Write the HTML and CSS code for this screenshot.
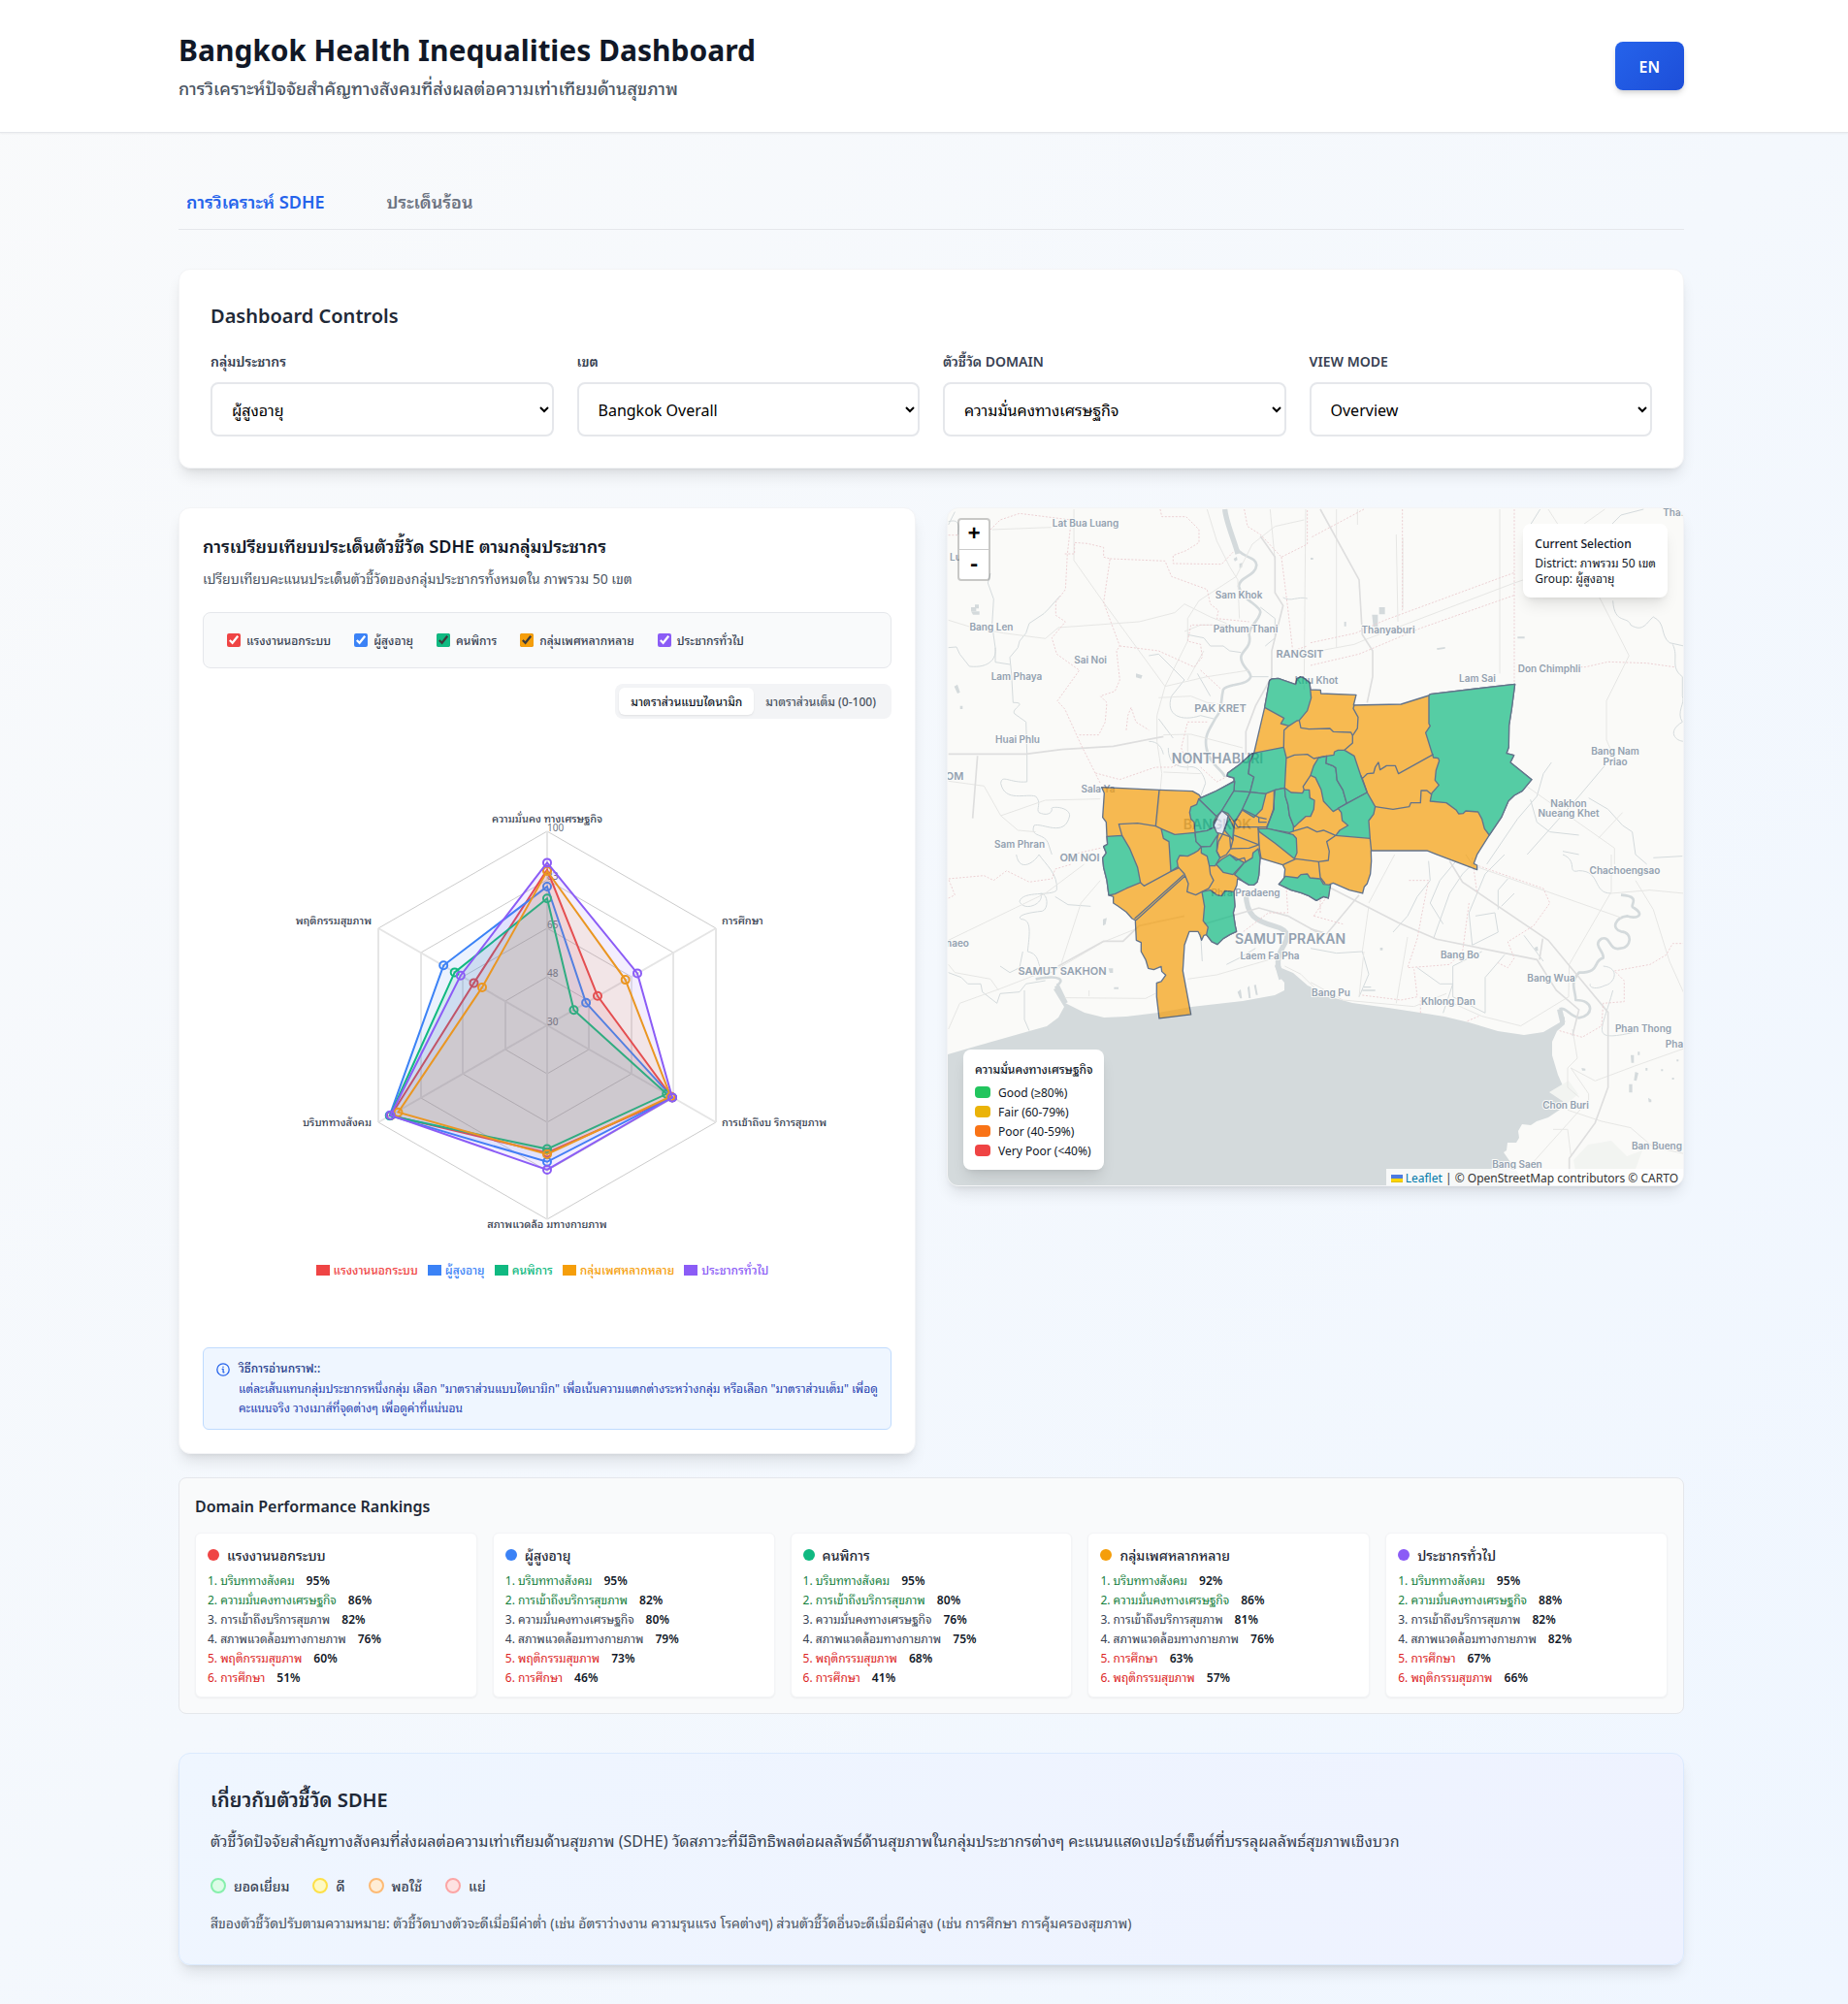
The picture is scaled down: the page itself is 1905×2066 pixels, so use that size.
FILE: index.html
```html
<!DOCTYPE html>
<html lang="th">
<head>
<meta charset="utf-8">
<meta name="viewport" content="width=device-width, initial-scale=1">
<title>Bangkok Health Inequalities Dashboard</title>
<link rel="stylesheet" href="styles.css">
</head>
<body>
<header class="site-header">
  <div class="container header-row">
    <div>
      <h1 class="site-title">Bangkok Health Inequalities Dashboard</h1>
      <p class="site-subtitle">การวิเคราะห์ปัจจัยสำคัญทางสังคมที่ส่งผลต่อความเท่าเทียมด้านสุขภาพ</p>
    </div>
    <button type="button" class="lang-button">EN</button>
  </div>
</header>

<main class="container main">
  <nav class="tabs">
    <button type="button" class="tab tab-active">การวิเคราะห์ SDHE</button>
    <button type="button" class="tab">ประเด็นร้อน</button>
  </nav>

  <section class="card controls">
    <h2 class="section-title">Dashboard Controls</h2>
    <div class="control-grid">
      <div class="field"><label for="group">กลุ่มประชากร</label><select id="group"><option>ผู้สูงอายุ</option></select></div>
      <div class="field"><label for="district">เขต</label><select id="district"><option>Bangkok Overall</option></select></div>
      <div class="field"><label for="domain">ตัวชี้วัด Domain</label><select id="domain"><option>ความมั่นคงทางเศรษฐกิจ</option></select></div>
      <div class="field"><label for="view">View Mode</label><select id="view"><option>Overview</option></select></div>
    </div>
  </section>

  <div class="panels">
    <section class="card chart-card">
      <h3 class="chart-title">การเปรียบเทียบประเด็นตัวชี้วัด SDHE ตามกลุ่มประชากร</h3>
      <p class="chart-subtitle">เปรียบเทียบคะแนนประเด็นตัวชี้วัดของกลุ่มประชากรทั้งหมดใน ภาพรวม 50 เขต</p>
      <div class="group-filter">
        <label><input type="checkbox" class="check-red" checked>แรงงานนอกระบบ</label>
        <label><input type="checkbox" class="check-blue" checked>ผู้สูงอายุ</label>
        <label><input type="checkbox" class="check-green" checked>คนพิการ</label>
        <label><input type="checkbox" class="check-amber" checked>กลุ่มเพศหลากหลาย</label>
        <label><input type="checkbox" class="check-purple" checked>ประชากรทั่วไป</label>
      </div>
      <div class="scale-row">
        <div class="scale-toggle">
          <button type="button" class="scale-option scale-active">มาตราส่วนแบบไดนามิก</button>
          <button type="button" class="scale-option">มาตราส่วนเต็ม (0-100)</button>
        </div>
      </div>
      <div class="chart">
        <svg class="radar" viewBox="0 0 710 540" role="img" aria-label="SDHE">
          <g class="radar-grid">
            <path d="M355 250L398 275V325L355 350L312 325V275Z"/>
            <path d="M355 200L442 250V350L355 400L268 350V250Z"/>
            <path d="M355 150L485 225V375L355 450L225 375V225Z"/>
            <path d="M355 100L529 200V400L355 500L181 400V200Z"/>
            <path class="radar-spoke" d="M355 300V100M355 300L529 200M355 300L529 400M355 300V500M355 300L181 400M355 300L181 200"/>
          </g>
          <g class="radar-ticks">
            <text x="355" y="300">30</text><text x="355" y="250">48</text><text x="355" y="200">65</text><text x="355" y="150">83</text><text x="355" y="100">100</text>
          </g>
          <g class="radar-labels">
            <text x="355" y="91" text-anchor="middle">ความมั่นคง ทางเศรษฐกิจ</text>
            <text x="535" y="196">การศึกษา</text>
            <text x="535" y="404">การเข้าถึงบ ริการสุขภาพ</text>
            <text x="355" y="509" text-anchor="middle">สภาพแวดล้อ มทางกายภาพ</text>
            <text x="174" y="404" text-anchor="end">บริบททางสังคม</text>
            <text x="174" y="196" text-anchor="end">พฤติกรรมสุขภาพ</text>
          </g>
          <g class="series series-red">
            <path d="M355 139.7L407 269.8L484 374.5L355 431.5L194 393L279.5 256.4Z"/>
            <circle cx="355" cy="139.7" r="4"/><circle cx="407" cy="269.8" r="4"/><circle cx="484" cy="374.5" r="4"/><circle cx="355" cy="431.5" r="4"/><circle cx="194" cy="393" r="4"/><circle cx="279.5" cy="256.4" r="4"/>
          </g>
          <g class="series series-blue">
            <path d="M355 157L395.1 276.8L484 374.4L355 440.8L192.7 393.1L248.2 238.3Z"/>
            <circle cx="355" cy="157" r="4"/><circle cx="395.1" cy="276.8" r="4"/><circle cx="484" cy="374.4" r="4"/><circle cx="355" cy="440.8" r="4"/><circle cx="192.7" cy="393.1" r="4"/><circle cx="248.2" cy="238.3" r="4"/>
          </g>
          <g class="series series-green">
            <path d="M355 169.3L382.5 284.2L478.2 370.8L355 427.6L193 393.3L259.7 245.4Z"/>
            <circle cx="355" cy="169.3" r="4"/><circle cx="382.5" cy="284.2" r="4"/><circle cx="478.2" cy="370.8" r="4"/><circle cx="355" cy="427.6" r="4"/><circle cx="193" cy="393.3" r="4"/><circle cx="259.7" cy="245.4" r="4"/>
          </g>
          <g class="series series-amber">
            <path d="M355 141L435.7 253.1L482.4 373.5L355 433L201.5 389.7L288 260.9Z"/>
            <circle cx="355" cy="141" r="4"/><circle cx="435.7" cy="253.1" r="4"/><circle cx="482.4" cy="373.5" r="4"/><circle cx="355" cy="433" r="4"/><circle cx="201.5" cy="389.7" r="4"/><circle cx="288" cy="260.9" r="4"/>
          </g>
          <g class="series series-purple">
            <path d="M355 132.4L448 246.4L484 374.5L355 448.9L193.5 392.8L265.8 248.7Z"/>
            <circle cx="355" cy="132.4" r="4"/><circle cx="448" cy="246.4" r="4"/><circle cx="484" cy="374.5" r="4"/><circle cx="355" cy="448.9" r="4"/><circle cx="193.5" cy="392.8" r="4"/><circle cx="265.8" cy="248.7" r="4"/>
          </g>
        </svg>
        <ul class="legend">
          <li class="text-red">แรงงานนอกระบบ</li>
          <li class="text-blue">ผู้สูงอายุ</li>
          <li class="text-green">คนพิการ</li>
          <li class="text-amber">กลุ่มเพศหลากหลาย</li>
          <li class="text-purple">ประชากรทั่วไป</li>
        </ul>
      </div>
      <div class="note">
        <svg class="note-icon" viewBox="0 0 16 16" aria-hidden="true"><circle cx="8" cy="8" r="6.2"/><path d="M7.2 7.4h.9v3.4h.9M8 5.2v.2"/></svg>
        <div>
          <p class="note-title">วิธีการอ่านกราฟ::</p>
          <p class="note-text">แต่ละเส้นแทนกลุ่มประชากรหนึ่งกลุ่ม เลือก "มาตราส่วนแบบไดนามิก" เพื่อเน้นความแตกต่างระหว่างกลุ่ม หรือเลือก "มาตราส่วนเต็ม" เพื่อดูคะแนนจริง วางเมาส์ที่จุดต่างๆ เพื่อดูค่าที่แน่นอน</p>
        </div>
      </div>
    </section>

    <section class="map">
      <svg class="map-canvas" viewBox="0 0 758 698" preserveAspectRatio="xMidYMid slice" role="img" aria-label="Bangkok districts">
        <path class="sea" d="M0 563L31 554L84 539L102 534L114 525L120 514L109 496L113 494L121 510L141 520L161 525L184 524L217 520L251 514L304 508L337 502L347 497V489L341 482L337 472L340 466L344 474L356 479L371 492L399 505L417 510L454 515L487 520L512 524L537 530L567 539L594 543L614 540L631 530L632 525L629 517L636 525V532L628 539L623 550V564L629 584L636 600L635 610L631 620L619 628L607 632L601 636L592 635L588 642L589 649L586 654H577L576 662L573 664L582 677L591 690L594 700H0Z"/>
        <path class="park" d="M650 700L645 672L660 656L684 652L700 668L716 662L708 684L720 700ZM620 602L640 590L650 604L638 614Z"/>

        <g transform="translate(-16 -13) scale(.3333)">
          <g class="river">
            <path class="river-wide" d="M905 42C908 80 935 140 945 180"/>
            <path class="river-mid" d="M930 130C940 200 1000 180 1003 215C1000 250 950 250 948 280C955 320 1015 340 1015 360C1010 390 980 400 980 430C990 470 955 480 955 500C955 530 985 540 985 560C975 590 910 580 900 600C890 640 900 660 875 690C860 720 840 740 848 780C855 830 900 850 905 870"/>
            <path d="M50 470L75 468L85 490L115 528C180 535 200 500 195 470L185 400L190 320L172 270L180 240M395 310L360 350L345 365L300 395L290 425L270 450L265 470L240 500L245 550L250 640C300 640 240 660 255 675L290 700L293 800V885C240 890 215 860 212 890C225 950 290 920 320 930C340 950 320 970 330 980C350 990 370 985 370 970C360 960 425 960 425 990C410 1060 340 1010 315 1020C300 1060 350 1040 360 1080L370 1110M195 470V515L240 522"/>
            <path d="M790 430L840 440L860 465L900 465L920 480L955 485M670 495L700 490L720 510L780 570L740 620C720 680 770 700 830 680L870 690M820 550L860 620M700 690L745 750M50 90L70 50M50 80C90 70 80 100 80 120M730 780C730 830 760 840 790 840C830 830 845 880 845 890L830 930M670 760C700 760 710 780 715 800M985 560H1040M1085 315C1110 330 1130 310 1160 318M1015 345L1060 380V440L1030 465"/>
          </g>
          <path class="pond" d="M120 345h12v-8h12v12h-8v8h-16ZM120 358h26v10h-20ZM68 590l10-6 8 24-8 4ZM86 650h8v10h-8ZM630 550l20 6-4 10-16-4ZM932 195l10-6 2 10-8 4ZM950 210l10-2-2 14-8 2Z"/>
          <g class="road">
            <path d="M438 42V200L530 330L720 590L695 680V760L710 860L695 1020M185 105L368 98M50 385L115 405L220 425L350 442L390 408L640 390L750 362L780 335L860 375L910 395M50 883L160 898L212 990L350 942L520 938M212 990L265 1035L320 1040M720 590L790 450V380L825 325L940 250L990 150L1060 95L1150 75M850 42L880 140L920 220L945 260L950 380M700 625L800 620L850 640L970 655M715 740L800 738L960 780M715 855L830 860M780 420L830 400L920 400M840 480L790 570M1155 42L1150 600M720 590L850 560L980 540M1045 42L1060 200M790 740V850"/>
          </g>
          <g class="highway">
            <path d="M50 799H290L400 785L560 775L715 745M140 805L125 998M1015 125L1060 190V300L1085 340L1050 480V560L1000 650L970 730V800"/>
          </g>
          <path class="boundary" d="M180 105L210 75L270 55L430 75L418 180L412 290L382 330V370L412 390L370 440L385 490L455 540L387 635L410 660L460 770L520 890M410 180H440V145L480 148L530 160V190L550 195L530 330L580 465L570 480L580 570L565 605L520 620L540 640L535 700L515 740L450 740M550 195L720 202L740 250L850 290L860 335L885 355L880 380L980 390M705 42L710 65L785 65L825 105V145L785 170L745 185V210L895 212L930 175M580 465L700 480L810 530L835 500L830 460L790 450L800 400H870M600 725L605 680L615 655L630 700L670 725M505 858L580 878L690 840H740L785 820L770 780L790 700H850M965 42L975 95L1015 120L1080 190L1160 150V42M1080 190L1100 350L1115 480L1160 465M830 540L895 600M830 840L880 885L910 870M50 122H80M520 1090L410 1115"/>
        </g>

        <g transform="translate(374 -13) scale(.3333)">
          <g class="river"><path d="M710 42L680 90M1030 42L960 60L930 90M935 325C940 400 980 370 990 400C1030 425 1040 390 1060 375C1100 395 1080 430 1110 455L1155 465M1120 460C1140 500 1110 530 1150 560V620C1160 640 1130 670 1150 700C1100 730 1130 760 1155 760V795M745 825L720 860L700 930L640 1000L545 1140M910 835L830 930L670 1110M860 935L920 970L965 1020L995 1040L1005 1110L1040 1140M680 940L700 1010L740 1040L830 1050M780 1100L830 1110M1060 1120L1150 1115"/></g>
          <path class="pond" d="M212 345h18v22h-18ZM190 368h18v38h-14ZM640 436h22v6h-22ZM390 472l26-4v5l-24 4ZM0 192h8v6h-8ZM104 390h6v14h-6Z"/>
          <g class="road"><path d="M0 485L135 460L170 445L630 270L780 220M735 42L830 190L985 495L915 635V755L930 790M910 42L800 120M670 900L940 1090V1140M965 980L890 1060M285 130V350M80 42V470M145 42V90M265 120L270 390M585 42V550"/></g>
          <g class="highway"><path d="M30 42L150 260L160 430L192 480V560L175 640"/></g>
          <path class="boundary" d="M165 42L0 130M284 42V355M630 42V580M0 455L140 425L230 385L630 238M0 525L150 490L340 410L630 308M780 530H850L920 514L1040 518L1125 530"/>
        </g>

        <g transform="translate(-16 357) scale(.3333)">
          <g class="river">
            <path d="M260 0C270 60 320 20 330 0C350 30 390 60 385 110C370 130 280 110 270 145C285 180 350 150 335 120C360 120 360 170 340 175C290 180 260 190 275 200C310 200 300 250 295 300C340 310 320 350 350 375M50 365L90 380L110 400L150 400L155 425L200 460L210 430L270 425L290 400L350 390M285 420V510L300 545M380 130L420 155L490 160M210 345L240 365L270 350L280 300M910 340L950 320L1000 290M830 240L835 330"/>
            <path class="river-mid" d="M320 385C400 370 410 390 385 405"/><path class="river-wide" d="M385 405L412 460"/>
            <path class="river-wide" d="M970 120C972 190 1000 205 1060 222C1110 235 1100 260 1085 285C1065 320 1065 340 1080 385"/>
          </g>
          <path class="pond" d="M528 200l12-4-4 20-8 4ZM545 352h14v14h-10ZM562 410h14v6h-14ZM944 425l10-8 4 28h-6ZM975 412l6-6 4 38h-6ZM995 404l6-2 6 32h-6Z"/>
          <g class="road"><path d="M50 265L350 120L470 30M50 540L85 460L210 415L390 345M400 335L460 150L520 80M350 375L530 270L630 230M50 340L70 365L180 385L205 420M410 443L660 445L690 430M790 385L880 372L1060 320M1200 430L1140 370L1090 345M485 420V438"/></g>
          <g class="highway"><path d="M390 345L530 268H590L640 220L780 190M840 215L1010 165L1100 190L1200 245"/></g>
          <path class="boundary" d="M50 135L70 125L50 75L160 65L190 80L230 50L300 85L370 75L380 45L430 30M1095 100L1100 180L1040 180L960 240M1200 180V120"/>
        </g>

        <g transform="translate(374 357) scale(.3333)">
          <g class="river">
            <path d="M480 0L500 30L470 60L430 120L380 260M365 20L370 80L330 130L300 190L255 240M450 20L400 80L370 150L410 215M600 0L540 60L490 180L500 280L580 240L570 180L510 190M610 75L580 110V170M530 300L440 345V440L540 490V380L600 310M0 290L80 305L160 300L180 370L150 440M330 350L400 400L440 400L410 490M630 120L590 160M660 250L720 330M780 0C830 20 790 60 830 50C900 50 870 120 930 120M935 420C900 550 860 580 1000 550"/>
            <path class="river-mid" d="M960 125C1030 130 980 160 1000 165C1040 190 1000 200 980 190C940 195 930 230 960 238C1000 240 990 290 960 290C920 300 930 250 900 260C870 280 910 300 905 320C870 330 900 365 830 365C800 400 820 420 820 450C880 450 875 500 830 505C800 500 790 470 770 478"/>
            <path class="river-wide" d="M770 478L780 520"/>
            <path d="M905 345C960 350 940 400 910 405C880 420 860 410 865 400"/>
          </g>
          <path class="pond" d="M215 288h8v8h-8ZM165 408h22v4h-22ZM160 418h40v4h-40ZM692 288l10-4 2 14h-8ZM990 620h10v24h-8ZM1012 610h6v10h-6ZM1004 672l10 4-6 24-8-2ZM985 710h10v26h-10ZM1036 660h6v8h-6ZM1084 664h6v6h-6ZM1118 690h6v6h-6ZM1044 752l10 6v8h-8ZM1132 634h6v6h-6ZM838 660l12 2v6h-10Z"/>
          <g class="road"><path d="M180 150L260 0M300 255L265 460M520 40L960 195M930 0V115L800 340L798 440L650 530L530 500L440 460M930 120L1050 110L1155 120M1005 80L1060 170L1110 330L1155 430M805 660L880 700L1000 655L1155 600M805 660L860 740V760L690 950M810 540L825 630L795 660V720L830 750M795 790L900 825L990 845L1060 905L1155 925M795 850L805 930M750 850H795M0 395L100 450L320 470L420 430M165 300L150 440M180 160L160 300"/></g>
          <g class="highway"><path d="M55 100L270 210L390 262L700 325L760 420L830 480L810 560M430 20L470 85L735 265L920 488V720L880 830L800 940V1000M718 260L708 325M0 230L50 245L150 125"/></g>
          <path class="boundary" d="M500 10L515 120M490 150L470 300L430 340L370 345L300 350L330 260L345 180L365 80H300M520 35L720 105L740 150L690 220L610 270L630 320L610 350L580 335M10 190L100 215M10 190L50 130M160 435L280 450L330 440L320 355M770 545L840 565L900 530L905 460L970 455V390L940 360L1050 340L1100 310L1120 275H1155M485 515L520 500M340 440V490"/>
        </g>

        <g class="place-labels">
          <text x="142" y="19">Lat Bua Luang</text><text x="8" y="54">Lu</text><text x="300" y="93">Sam Khok</text>
          <text x="45" y="126">Bang Len</text><text x="307" y="128">Pathum Thani</text><text x="147" y="160">Sai Noi</text>
          <text x="71" y="177">Lam Phaya</text><text x="380" y="181">Khu Khot</text><text x="72" y="242">Huai Phlu</text>
          <text x="155" y="293">Sala Ya</text><text x="74" y="350">Sam Phran</text><text x="454" y="129">Thanyaburi</text>
          <text x="748" y="8">Tha.</text><text x="620" y="169">Don Chimphli</text><text x="546" y="179">Lam Sai</text>
          <text x="688" y="254">Bang Nam</text><text x="688" y="265">Priao</text><text x="640" y="308">Nakhon</text><text x="640" y="318">Nueang Khet</text>
          <text x="10" y="452">naeo</text><text x="307" y="400">Phra Pradaeng</text><text x="332" y="465">Laem Fa Pha</text>
          <text x="395" y="503">Bang Pu</text><text x="528" y="464">Bang Bo</text><text x="516" y="512">Khlong Dan</text><text x="622" y="488">Bang Wua</text>
          <text x="698" y="377">Chachoengsao</text><text x="717" y="540">Phan Thong</text><text x="749" y="556">Pha</text><text x="637" y="619">Chon Buri</text>
          <text x="731" y="661">Ban Bueng</text><text x="587" y="680">Bang Saen</text>
        </g>
        <g class="place-labels town-labels">
          <text x="363" y="154">RANGSIT</text><text x="281" y="210">PAK KRET</text><text x="7" y="280">OM</text><text x="136" y="364">OM NOI</text><text x="118" y="481">SAMUT SAKHON</text>
        </g>
        <g class="place-labels city-labels">
          <text x="278" y="263">NONTHABURI</text><text x="353" y="449">SAMUT PRAKAN</text><text class="capital" x="278" y="331">BANGKOK</text>
        </g>

        <g class="districts" transform="translate(124 147) scale(.3333)">
          <path class="fair" d="M608 175L623 92L630 87L650 85L704 104L708 86L718 81L728 83L733 88L747 98L750 120L781 121L782 132L891 136L883 168L1030 165L1116 138L1120 134L1382 103L1372 180L1364 230L1363 298L1356 317L1379 323L1368 345L1434 398L1405 433L1380 447L1362 464L1340 515L1303 570L1265 630L1255 658L1265 663V677L1140 630L1110 618H937L938 650L935 690L925 720L916 730L911 750L870 740L820 718L810 722L805 765L790 760L768 772L745 758L720 748L690 740L652 722L668 705L671 675L664 662L597 642L594 640L590 695L585 715L575 724H560L540 712L524 705L522 725L513 745L516 790L511 810L517 850L521 868L500 878L480 890L462 908L445 900L428 878L420 880L413 895L408 880L402 868H375L360 910L355 990L380 1125L282 1137L274 1070V1027L288 1023L302 1003L290 992L288 976L265 986L248 982L240 955L226 930V902L211 895L208 833L198 828L180 808L155 790L140 780V760L126 756L120 710L110 670L107 640L118 625L110 605L122 598L120 574L118 530L107 515L112 440L104 422L282 430L385 434L405 445L411 454L455 435L513 403V393L492 387L494 378L530 352L565 320L575 316Z"/>
          <g class="good">
            <path d="M608 175L623 92L630 87L650 85L704 104L708 86L718 81L728 83L733 88L747 98L752 145L740 185L715 215L708 216L683 232L658 225L668 208Z"/>
            <path d="M1116 138L1120 134L1382 103L1372 180L1364 230L1363 298L1356 317L1379 323L1368 345L1434 398L1405 433L1380 447L1362 464L1340 515L1303 570L1288 550L1280 520L1268 498L1230 495L1222 503L1208 504L1200 492L1170 470L1120 465L1125 440L1147 415L1135 400L1138 370L1148 340L1145 332L1130 330L1106 253L1120 232L1116 225Z"/>
            <path d="M492 387L494 378L530 352L565 320L575 316L562 345L558 380L575 390L563 437L513 433L515 405L513 393Z"/>
            <path d="M575 316L667 298L675 330L670 424L640 430L610 442L563 437L575 390L558 380L562 345Z"/>
            <path d="M404 458L455 435L515 403L513 433L475 495L459 512Z"/>
            <path d="M513 433L563 437L540 490L515 530L495 503L475 495Z"/>
            <path d="M404 458L398 475L380 483L376 500L380 520L390 530L393 562L430 556L452 546L450 530L459 512Z"/>
            <path d="M563 437L612 442L600 490L575 515L538 492Z"/>
            <path d="M640 430L670 424L673 450L680 475L685 510L697 540L697 558L685 562L614 550L625 520L635 490Z"/>
            <path d="M670 424L690 438L725 440L730 430H746L748 455L762 462L760 490L750 512H735L715 530L700 545L697 540L685 510L680 475L672 450Z"/>
            <path d="M775 330L800 325L798 348L818 355L828 362L832 400L850 430L862 472L820 497L790 465L783 430L765 392L750 385L760 355Z"/>
            <path d="M800 325L822 322L824 312L835 307L855 307L885 325L905 385L925 438L862 472L850 430L832 400L828 362L818 355L798 348Z"/>
            <path d="M925 438L950 482L945 505L930 525L934 580L828 571L840 555L866 540L848 525L845 500L835 487L862 472Z"/>
            <path d="M588 550H620L695 568L706 580L708 625L700 643L640 595L592 560Z"/>
            <path d="M288 550L330 568L393 562L396 590L412 606L402 618L390 625L370 635L345 633L337 650L340 668L318 682L312 590L295 580Z"/>
            <path d="M393 562L430 556L452 546L465 568L455 595L440 605L412 606L396 590Z"/>
            <path d="M412 606L440 605L462 570L460 620L470 640L455 665L437 665L430 635L412 625Z"/>
            <path d="M458 660L475 645L500 630L545 655L510 692L480 685Z"/>
            <path d="M515 692L545 655L570 640L572 625L588 612L594 640L590 695L585 715L575 724H560L540 712Z"/>
            <path d="M652 722L672 697L710 702L720 692L740 690L748 702L780 705L790 722L812 724L805 765L790 760L768 772L745 758L720 748L690 740Z"/>
            <path d="M414 745L440 740L460 755L475 758L485 742L513 745L516 790L511 810L517 850L521 868L500 878L480 890L462 908L445 900L428 878L433 855L418 835L422 790Z"/>
            <path d="M120 574L167 571L190 610L215 670L224 717L180 735L145 752L126 756L120 710L110 670L107 640L118 625L110 605L122 598Z"/>
            <path d="M490 535L495 510L512 545L510 585L484 555Z"/>
          </g>
          <path class="no-data" d="M466 507L476 495L495 510L490 535L478 567L460 562L450 540Z"/>
          <path class="edges" d="M715 215L720 238L745 242L810 240L820 250L875 252L880 262M885 168L882 178L897 205L895 240L880 262V285L855 307M683 232L668 245L667 298M675 332L700 322L740 320L760 333L800 325M750 385L727 420L730 430M282 430L271 542M167 571L157 536L215 533L271 542L288 550M224 717L235 727L318 682L345 670M206 828L358 692M210 833L362 696M340 668L360 690L372 720L368 745L395 755L414 745L435 735L450 710L440 690L437 665M478 567L465 590L460 620L470 640L490 630L503 612L500 575L478 567M515 530L510 585L503 612M540 490L590 515L614 520M538 492L515 530L525 545L588 545L590 600M512 570L590 600M503 612L560 610L590 600M500 630L520 648L545 640L550 655M637 432L637 490L614 545H588M590 515V530H614M588 550L592 612L597 642M664 662L705 643L775 652L805 648M697 558L740 545L770 560L790 555L828 571L800 590L808 620L805 648L775 652L780 700L795 720M934 580L938 618M905 385L910 395L925 380L945 378L950 360L960 345L965 368L985 355H1012L1022 380L1130 320M910 395L925 438M950 482L1005 490L1055 482L1060 470H1090L1092 432H1110L1125 445"/>
        </g>
      </svg>

      <div class="zoom-control">
        <button type="button" aria-label="Zoom in">+</button>
        <button type="button" aria-label="Zoom out">-</button>
      </div>
      <div class="map-box selection">
        <p class="map-box-title">Current Selection</p>
        <p>District: ภาพรวม 50 เขต</p>
        <p>Group: ผู้สูงอายุ</p>
      </div>
      <div class="map-box map-legend">
        <p class="map-box-title">ความมั่นคงทางเศรษฐกิจ</p>
        <ul>
          <li class="key-good">Good (≥80%)</li>
          <li class="key-fair">Fair (60-79%)</li>
          <li class="key-poor">Poor (40-59%)</li>
          <li class="key-bad">Very Poor (&lt;40%)</li>
        </ul>
      </div>
      <div class="attribution">
        <svg viewBox="0 0 12 8" aria-hidden="true"><path fill="#4c7be1" d="M0 0h12v4H0z"/><path fill="#ffd500" d="M0 4h12v3H0z"/><path fill="#e0bc00" d="M0 7h12v1H0z"/></svg>
        <a href="#">Leaflet</a> | © OpenStreetMap contributors © CARTO
      </div>
    </section>
  </div>

  <section class="rankings">
    <h3 class="rankings-title">Domain Performance Rankings</h3>
    <div class="ranking-grid">
      <article class="ranking">
        <h4 class="dot-red">แรงงานนอกระบบ</h4>
        <ol>
          <li class="high"><span>1. บริบททางสังคม</span><b>95%</b></li>
          <li class="high"><span>2. ความมั่นคงทางเศรษฐกิจ</span><b>86%</b></li>
          <li><span>3. การเข้าถึงบริการสุขภาพ</span><b>82%</b></li>
          <li><span>4. สภาพแวดล้อมทางกายภาพ</span><b>76%</b></li>
          <li class="low"><span>5. พฤติกรรมสุขภาพ</span><b>60%</b></li>
          <li class="low"><span>6. การศึกษา</span><b>51%</b></li>
        </ol>
      </article>
      <article class="ranking">
        <h4 class="dot-blue">ผู้สูงอายุ</h4>
        <ol>
          <li class="high"><span>1. บริบททางสังคม</span><b>95%</b></li>
          <li class="high"><span>2. การเข้าถึงบริการสุขภาพ</span><b>82%</b></li>
          <li><span>3. ความมั่นคงทางเศรษฐกิจ</span><b>80%</b></li>
          <li><span>4. สภาพแวดล้อมทางกายภาพ</span><b>79%</b></li>
          <li class="low"><span>5. พฤติกรรมสุขภาพ</span><b>73%</b></li>
          <li class="low"><span>6. การศึกษา</span><b>46%</b></li>
        </ol>
      </article>
      <article class="ranking">
        <h4 class="dot-green">คนพิการ</h4>
        <ol>
          <li class="high"><span>1. บริบททางสังคม</span><b>95%</b></li>
          <li class="high"><span>2. การเข้าถึงบริการสุขภาพ</span><b>80%</b></li>
          <li><span>3. ความมั่นคงทางเศรษฐกิจ</span><b>76%</b></li>
          <li><span>4. สภาพแวดล้อมทางกายภาพ</span><b>75%</b></li>
          <li class="low"><span>5. พฤติกรรมสุขภาพ</span><b>68%</b></li>
          <li class="low"><span>6. การศึกษา</span><b>41%</b></li>
        </ol>
      </article>
      <article class="ranking">
        <h4 class="dot-amber">กลุ่มเพศหลากหลาย</h4>
        <ol>
          <li class="high"><span>1. บริบททางสังคม</span><b>92%</b></li>
          <li class="high"><span>2. ความมั่นคงทางเศรษฐกิจ</span><b>86%</b></li>
          <li><span>3. การเข้าถึงบริการสุขภาพ</span><b>81%</b></li>
          <li><span>4. สภาพแวดล้อมทางกายภาพ</span><b>76%</b></li>
          <li class="low"><span>5. การศึกษา</span><b>63%</b></li>
          <li class="low"><span>6. พฤติกรรมสุขภาพ</span><b>57%</b></li>
        </ol>
      </article>
      <article class="ranking">
        <h4 class="dot-purple">ประชากรทั่วไป</h4>
        <ol>
          <li class="high"><span>1. บริบททางสังคม</span><b>95%</b></li>
          <li class="high"><span>2. ความมั่นคงทางเศรษฐกิจ</span><b>88%</b></li>
          <li><span>3. การเข้าถึงบริการสุขภาพ</span><b>82%</b></li>
          <li><span>4. สภาพแวดล้อมทางกายภาพ</span><b>82%</b></li>
          <li class="low"><span>5. การศึกษา</span><b>67%</b></li>
          <li class="low"><span>6. พฤติกรรมสุขภาพ</span><b>66%</b></li>
        </ol>
      </article>
    </div>
  </section>

  <section class="card about">
    <h3 class="section-title">เกี่ยวกับตัวชี้วัด SDHE</h3>
    <p class="about-text">ตัวชี้วัดปัจจัยสำคัญทางสังคมที่ส่งผลต่อความเท่าเทียมด้านสุขภาพ (SDHE) วัดสภาวะที่มีอิทธิพลต่อผลลัพธ์ด้านสุขภาพในกลุ่มประชากรต่างๆ คะแนนแสดงเปอร์เซ็นต์ที่บรรลุผลลัพธ์สุขภาพเชิงบวก</p>
    <ul class="levels">
      <li class="level-excellent">ยอดเยี่ยม</li>
      <li class="level-good">ดี</li>
      <li class="level-fair">พอใช้</li>
      <li class="level-poor">แย่</li>
    </ul>
    <p class="about-note">สีของตัวชี้วัดปรับตามความหมาย: ตัวชี้วัดบางตัวจะดีเมื่อมีค่าต่ำ (เช่น อัตราว่างงาน ความรุนแรง โรคต่างๆ) ส่วนตัวชี้วัดอื่นจะดีเมื่อมีค่าสูง (เช่น การศึกษา การคุ้มครองสุขภาพ)</p>
  </section>
</main>
</body>
</html>
```
FILE: styles.css
```css
:root {
  --red: #ef4444;
  --blue: #3b82f6;
  --green: #10b981;
  --amber: #f59e0b;
  --purple: #8b5cf6;
  --line: #e5e7eb;
}

*, *::before, *::after { box-sizing: border-box; }
h1, h2, h3, h4, p, ul, ol { margin: 0; padding: 0; }
ul, ol { list-style: none; }

body {
  margin: 0;
  font-family: "Noto Sans Thai Looped", "Noto Sans", sans-serif;
  font-size: 16px;
  line-height: 24px;
  color: #111827;
  background: linear-gradient(135deg, #f9fafb, #eff6ff);
}
button, select, input { font: inherit; color: inherit; }
button { cursor: pointer; border: 0; padding: 0; background: none; }

.container {
  max-width: 1615px;
  margin: 0 auto;
  padding: 0 24px 0 39px;
}

/* Header */
.site-header {
  background: #fff;
  border-bottom: 1px solid var(--line);
  box-shadow: 0 1px 2px rgba(0, 0, 0, .05);
}
.header-row {
  display: flex;
  align-items: center;
  justify-content: space-between;
  padding-top: 32px;
  padding-bottom: 32px;
}
.site-title { font-size: 30px; line-height: 36px; font-weight: 700; }
.site-subtitle { margin-top: 8px; font-size: 18px; line-height: 28px; font-weight: 500; color: #4b5563; }
.lang-button {
  padding: 13px 25px;
  border-radius: 8px;
  color: #fff;
  font-weight: 600;
  background: linear-gradient(135deg, #2563eb, #1d4ed8);
  box-shadow: 0 4px 6px -1px rgba(0, 0, 0, .15), 0 2px 4px -2px rgba(0, 0, 0, .1);
}

/* Tabs */
.main { padding-top: 40px; padding-bottom: 40px; }
.tabs {
  display: flex;
  gap: 48px;
  border-bottom: 1px solid var(--line);
  margin-bottom: 40px;
}
.tab {
  padding: 16px 8px 15px;
  font-size: 18px;
  line-height: 28px;
  font-weight: 600;
  color: #6b7280;
}
.tab-active { color: #2563eb; }

/* Cards */
.card {
  border: 1px solid #f3f4f6;
  border-radius: 12px;
  background: #fff;
  box-shadow: 0 10px 15px -3px rgba(0, 0, 0, .1), 0 4px 6px -4px rgba(0, 0, 0, .1);
}
.section-title { font-size: 20px; line-height: 28px; font-weight: 600; color: #1f2937; }

.controls { padding: 32px; margin-bottom: 40px; }
.control-grid {
  display: grid;
  grid-template-columns: repeat(4, 1fr);
  gap: 24px;
  margin-top: 24px;
}
.field { display: flex; flex-direction: column; gap: 12px; min-width: 0; }
.field label {
  font-size: 14px;
  line-height: 20px;
  font-weight: 600;
  text-transform: uppercase;
  color: #374151;
}
.field select {
  height: 56px;
  width: 100%;
  padding: 0 16px;
  border: 2px solid var(--line);
  border-radius: 8px;
  background: #fff;
  color: #000;
}

.panels {
  display: grid;
  grid-template-columns: 1fr 1fr;
  gap: 32px;
  align-items: start;
  margin-bottom: 24px;
}

/* Chart card */
.chart-card { padding: 24px; min-width: 0; }
.chart-title { font-size: 18px; line-height: 28px; font-weight: 600; }
.chart-subtitle { margin-top: 8px; font-size: 14px; line-height: 23px; color: #4b5563; }
.group-filter {
  display: flex;
  flex-wrap: wrap;
  gap: 24px;
  margin-top: 24px;
  padding: 16px 24px;
  border: 1px solid var(--line);
  border-radius: 8px;
  background: #f9fafb;
}
.group-filter label {
  display: flex;
  align-items: center;
  gap: 6px;
  font-size: 12px;
  font-weight: 500;
  color: #374151;
}
.group-filter input { width: 14px; height: 14px; margin: 0; }
.check-red { accent-color: var(--red); }
.check-blue { accent-color: var(--blue); }
.check-green { accent-color: var(--green); }
.check-amber { accent-color: var(--amber); }
.check-purple { accent-color: var(--purple); }

.scale-row { display: flex; justify-content: flex-end; margin-top: 16px; }
.scale-toggle { display: flex; padding: 4px; border-radius: 8px; background: #f3f4f6; }
.scale-option {
  padding: 6px 12px;
  border-radius: 6px;
  font-size: 12px;
  line-height: 16px;
  font-weight: 500;
  color: #4b5563;
}
.scale-active { background: #fff; color: #111827; box-shadow: 0 1px 2px rgba(0, 0, 0, .08); }

.chart { margin-top: 16px; padding-bottom: 52px; }
.radar { display: block; width: 100%; height: 540px; }
.radar-grid { fill: none; stroke: #ccc; }
.radar-spoke { stroke: #e5e5e5; stroke-width: 2; }
.radar-ticks { font-size: 10px; fill: #6b7280; }
.radar-labels { font-size: 11px; font-weight: 500; fill: #374151; }
.series { fill: none; stroke-width: 2; }
.series path { fill-opacity: .1; }
.series-red { stroke: var(--red); } .series-red path { fill: var(--red); }
.series-blue { stroke: var(--blue); } .series-blue path { fill: var(--blue); }
.series-green { stroke: var(--green); } .series-green path { fill: var(--green); }
.series-amber { stroke: var(--amber); } .series-amber path { fill: var(--amber); }
.series-purple { stroke: var(--purple); } .series-purple path { fill: var(--purple); }

.legend { display: flex; flex-wrap: wrap; justify-content: center; font-size: 12px; font-weight: 500; }
.legend li { display: flex; align-items: center; gap: 4px; margin-right: 10px; }
.legend li::before { content: ""; width: 14px; height: 11px; background: currentColor; }
.text-red { color: var(--red); }
.text-blue { color: var(--blue); }
.text-green { color: var(--green); }
.text-amber { color: var(--amber); }
.text-purple { color: var(--purple); }

.note {
  display: flex;
  gap: 8px;
  margin-top: 16px;
  padding: 12px;
  border: 1px solid #bfdbfe;
  border-radius: 6px;
  background: #eff6ff;
  font-size: 12px;
}
.note-icon { flex: none; width: 16px; height: 16px; margin-top: 2px; fill: none; stroke: #2563eb; stroke-width: 1.3; stroke-linecap: round; stroke-linejoin: round; }
.note-title { line-height: 16px; font-weight: 500; color: #1e3a8a; }
.note-text { margin-top: 3px; line-height: 20px; color: #1e40af; }

/* Map */
.map {
  position: relative;
  height: 700px;
  overflow: hidden;
  border: 1px solid #f3f4f6;
  border-radius: 12px;
  background: #fafaf8;
  box-shadow: 0 10px 15px -3px rgba(0, 0, 0, .1), 0 4px 6px -4px rgba(0, 0, 0, .1);
}
.map-canvas { display: block; width: 100%; height: 100%; }
.sea, .pond { fill: #d4dadc; }
.park { fill: #f2f4f1; }
.river { fill: none; stroke: #d4dadc; stroke-width: 3; stroke-linejoin: round; }
.river-mid { stroke-width: 8; }
.river-wide { stroke-width: 16; }
.road { fill: none; stroke: #e6e6e4; stroke-width: 3; }
.highway { fill: none; stroke: #dedede; stroke-width: 5; }
.boundary { fill: none; stroke: #ecd0d3; stroke-width: 3; stroke-dasharray: 6 5; }
.place-labels {
  font-family: Inter, "Noto Sans", sans-serif;
  font-size: 10px;
  font-weight: 600;
  fill: #93a1b0;
  stroke: #fafaf8;
  stroke-width: 2;
  paint-order: stroke;
  text-anchor: middle;
}
.town-labels { font-size: 11px; }
.city-labels { font-size: 14px; }
.capital { stroke: none; }
.districts { opacity: .7; stroke: #243b5d; stroke-width: 4; stroke-linejoin: round; }
.fair { fill: #f59e0b; }
.good { fill: #10b981; }
.no-data { fill: #e0e4f2; }
.edges { fill: none; }

.zoom-control {
  position: absolute;
  top: 10px;
  left: 10px;
  overflow: hidden;
  border: 2px solid rgba(0, 0, 0, .2);
  border-radius: 4px;
  background: #fff;
  background-clip: padding-box;
}
.zoom-control button {
  display: block;
  width: 30px;
  height: 30px;
  padding-top: 2px;
  font: 700 22px/28px "Liberation Mono", monospace;
  color: #000;
}
.zoom-control button + button { height: 31px; border-top: 1px solid #ccc; }

.map-box {
  position: absolute;
  padding: 12px;
  border-radius: 8px;
  background: #fff;
  font-size: 12px;
  line-height: 16px;
  color: #111827;
  box-shadow: 0 10px 15px -3px rgba(0, 0, 0, .1), 0 4px 6px -4px rgba(0, 0, 0, .1);
}
.map-box-title { font-weight: 500; margin-bottom: 4px; }
.selection { top: 16px; right: 16px; }
.map-legend { bottom: 16px; left: 16px; }
.map-legend ul { display: grid; gap: 4px; margin-top: 8px; }
.map-legend li { display: flex; align-items: center; gap: 8px; }
.map-legend li::before { content: ""; width: 16px; height: 12px; border-radius: 4px; background: var(--key); }
.key-good { --key: #22c55e; }
.key-fair { --key: #eab308; }
.key-poor { --key: #f97316; }
.key-bad { --key: #ef4444; }

.attribution {
  position: absolute;
  right: 0;
  bottom: 0;
  padding: 0 5px;
  background: rgba(255, 255, 255, .8);
  font-size: 12px;
  line-height: 17px;
  color: #333;
}
.attribution svg { width: 12px; height: 8px; }
.attribution a { color: #0078a8; text-decoration: none; }

/* Rankings */
.rankings {
  margin-bottom: 40px;
  padding: 16px;
  border: 1px solid var(--line);
  border-radius: 8px;
  background: #f9fafb;
}
.rankings-title { font-size: 16px; line-height: 24px; font-weight: 600; color: #1f2937; }
.ranking-grid { display: grid; grid-template-columns: repeat(5, 1fr); gap: 16px; margin-top: 16px; }
.ranking {
  padding: 12px;
  border: 1px solid #f3f4f6;
  border-radius: 6px;
  background: #fff;
  box-shadow: 0 1px 2px rgba(0, 0, 0, .05);
}
.ranking h4 { display: flex; align-items: center; gap: 8px; margin-bottom: 8px; font-size: 14px; line-height: 20px; font-weight: 500; color: #1f2937; }
.ranking h4::before { content: ""; width: 12px; height: 12px; border-radius: 50%; background: var(--dot); }
.dot-red { --dot: var(--red); }
.dot-blue { --dot: var(--blue); }
.dot-green { --dot: var(--green); }
.dot-amber { --dot: var(--amber); }
.dot-purple { --dot: var(--purple); }
.ranking ol { display: grid; gap: 4px; font-size: 12px; line-height: 16px; color: #374151; }
.ranking li { display: flex; gap: 12px; }
.ranking b { font-weight: 600; color: #111827; }
.ranking .high { color: #15803d; }
.ranking .low { color: #dc2626; }

/* About */
.about { padding: 32px; border-color: #dbeafe; background: linear-gradient(135deg, #eff6ff, #eef2ff); }
.about-text { margin-top: 16px; line-height: 26px; color: #374151; }
.levels { display: flex; flex-wrap: wrap; gap: 24px; margin-top: 24px; font-size: 14px; line-height: 20px; font-weight: 500; color: #374151; }
.levels li { display: flex; align-items: center; gap: 8px; }
.levels li::before { content: ""; width: 16px; height: 16px; border: 2px solid var(--ring); border-radius: 50%; background: var(--fill); }
.level-excellent { --ring: #86efac; --fill: #dcfce7; }
.level-good { --ring: #fde047; --fill: #fef9c3; }
.level-fair { --ring: #fdba74; --fill: #ffedd5; }
.level-poor { --ring: #fca5a5; --fill: #fee2e2; }
.about-note { margin-top: 16px; font-size: 14px; line-height: 23px; color: #4b5563; }
```
